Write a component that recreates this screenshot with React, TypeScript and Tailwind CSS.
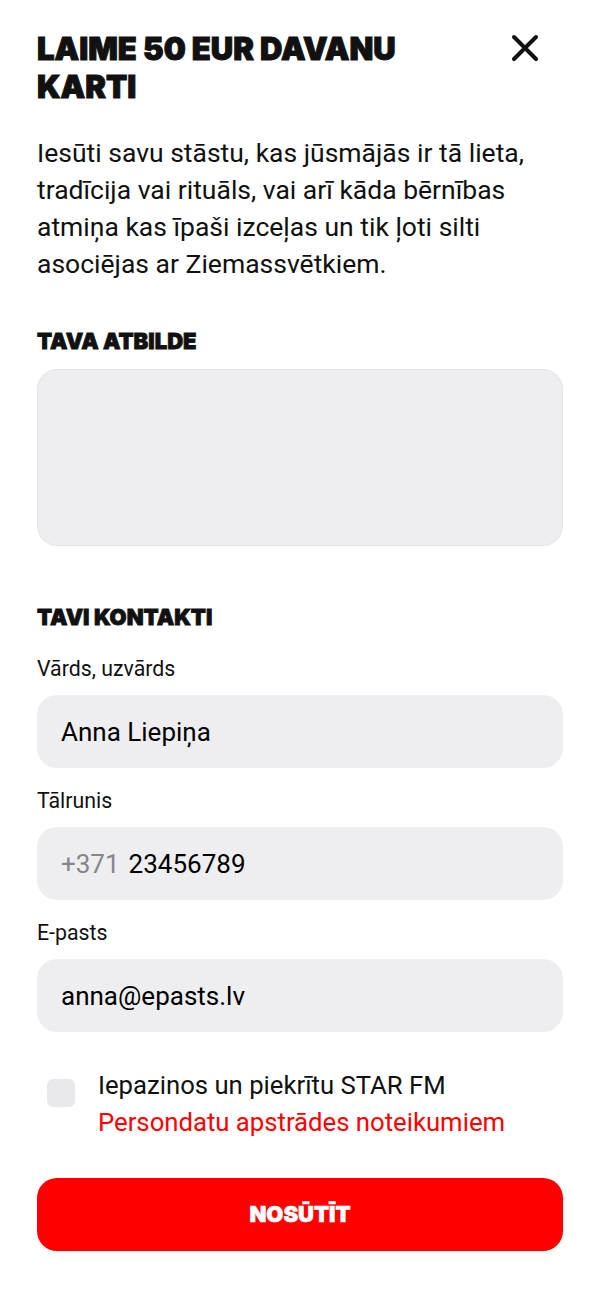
import React from "react";

const body = { fontFamily: 'Roboto, "Noto Sans", sans-serif' };
const heavy = { fontFamily: '"Inter", "Noto Sans", sans-serif' };

function Field({ label, children }: { label: string; children: React.ReactNode }) {
  return (
    <div className="flex flex-col">
      <div className="text-[21.3px] leading-[28px] text-[#111] h-[28px]">{label}</div>
      <div className="mt-[12px] h-[73px] rounded-[20px] bg-[#eeeef0] flex items-center px-[24px] pt-[1px] text-[26px] text-black">
        {children}
      </div>
    </div>
  );
}

export default function App() {
  return (
    <div className="w-[600px] h-[1299px] bg-white px-[37px] pt-[30px] overflow-hidden" style={body}>
      <div className="flex justify-between items-start">
        <h1 className="w-[400px] text-[31px] leading-[38px] font-black text-[#111] uppercase [-webkit-text-stroke:1px_#111]" style={heavy}>LAIME 50 EUR DAVANU KARTI</h1>
        <svg width="28" height="28" viewBox="0 0 28 28" className="mt-[4px] mr-[24px]" fill="none" stroke="#111" strokeWidth="4" strokeLinecap="round">
          <path d="M3 3L25 25M25 3L3 25" />
        </svg>
      </div>
      <p className="mt-[28px] text-[26.5px] leading-[37px] font-[430] text-[#111]">Iesūti savu stāstu, kas jūsmājās ir tā lieta, tradīcija vai rituāls, vai arī kāda bērnības atmiņa kas īpaši izceļas un tik ļoti silti asociējas ar Ziemassvētkiem.</p>
      <h2 className="mt-[44px] text-[22px] leading-[30px] font-black text-[#111] [-webkit-text-stroke:0.8px_#111]" style={heavy}>TAVA ATBILDE</h2>
      <div className="mt-[13px] h-[177px] rounded-[20px] bg-[#eeeef0] border border-[#e4e4e6]" />
      <h2 className="mt-[56px] text-[22px] leading-[30px] font-black text-[#111] [-webkit-text-stroke:0.8px_#111]" style={heavy}>TAVI KONTAKTI</h2>
      <div className="mt-[23px] flex flex-col gap-[19px]">
        <Field label="Vārds, uzvārds">Anna Liepiņa</Field>
        <Field label="Tālrunis"><span className="text-[#85858a]">+371</span><span className="ml-[9px]">23456789</span></Field>
        <Field label="E-pasts">anna@epasts.lv</Field>
      </div>
      <div className="mt-[35px] flex items-start">
        <div className="ml-[10px] mt-[12px] w-[28px] h-[28px] rounded-[6px] bg-[#e9e9eb]" />
        <div className="ml-[23px] text-[25.7px] leading-[37px] font-[430]">
          <div className="text-[#111]">Iepazinos un piekrītu STAR FM</div>
          <div className="text-[#ff0000]">Persondatu apstrādes noteikumiem</div>
        </div>
      </div>
      <button className="mt-[37px] w-full h-[73px] rounded-[20px] bg-[#ff0000] text-white text-[22px] font-black [-webkit-text-stroke:0.6px_#fff]" style={heavy}>NOSŪTĪT</button>
    </div>
  );
}
